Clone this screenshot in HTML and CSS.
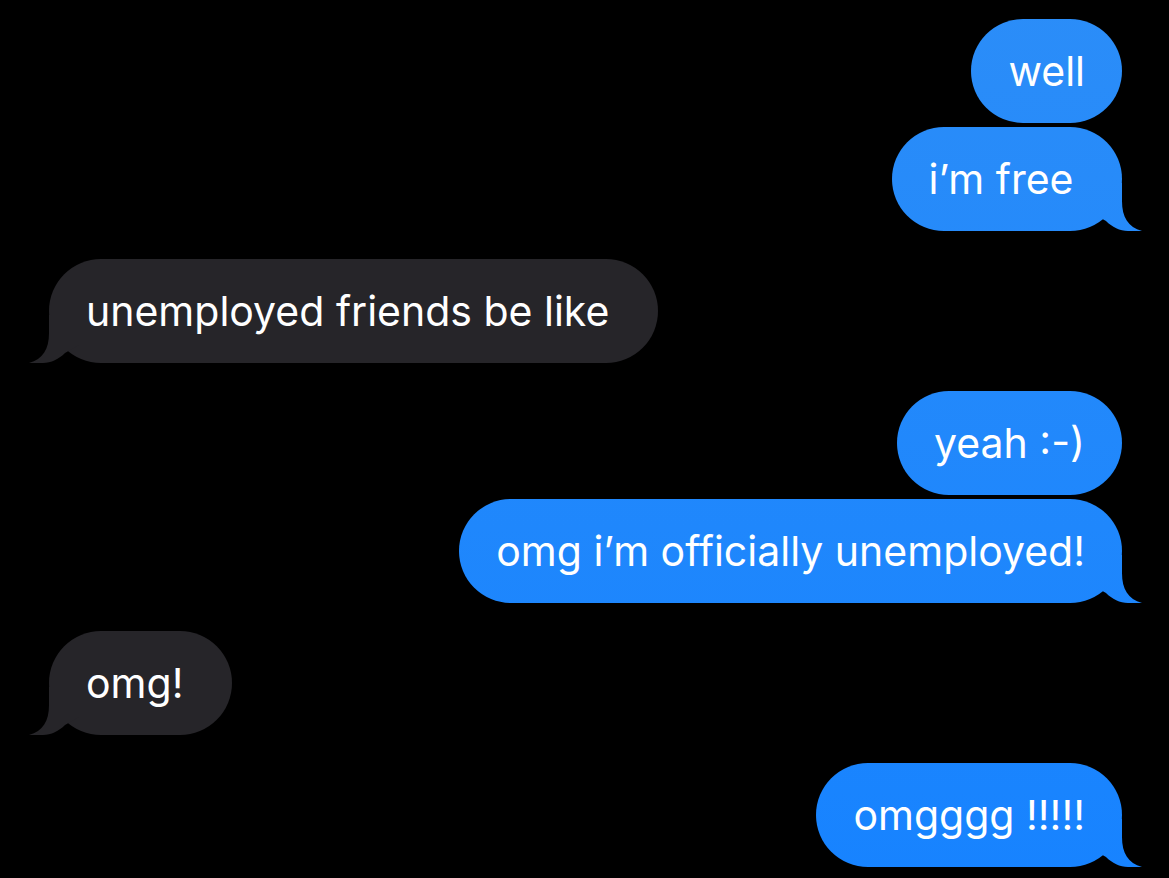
FILE: index.html
```html
<!DOCTYPE html>
<html lang="en">

<head>
    <meta charset="UTF-8" />
    <meta name="viewport" content="width=device-width, initial-scale=1.0" />
    <title>Messages</title>
    <link rel="stylesheet" href="styles.css">
</head>

<body>
    <main class="thread">
        <div class="group sent">
            <p class="bubble">well</p>
            <p class="bubble tail">i’m free&nbsp;</p>
        </div>
        <div class="group received">
            <p class="bubble tail">unemployed friends be like&nbsp;</p>
        </div>
        <div class="group sent">
            <p class="bubble">yeah :-)</p>
            <p class="bubble tail">omg i’m officially unemployed!</p>
        </div>
        <div class="group received">
            <p class="bubble tail">omg!&nbsp;</p>
        </div>
        <div class="group sent">
            <p class="bubble tail">omgggg !!!!!</p>
        </div>
    </main>
</body>

</html>
```

FILE: styles.css
```css
body {
  margin: 0;
  background-color: #000;
  font-family: Inter, "Noto Sans", sans-serif;
  color: #fff;
}

.thread {
  display: flex;
  flex-direction: column;
  gap: 28px;
  padding: 19px 47px 0 49px;
}

.group {
  display: flex;
  flex-direction: column;
  gap: 4px;
}

.sent {
  align-items: flex-end;
}

.received {
  align-items: flex-start;
}

.bubble {
  position: relative;
  margin: 0;
  padding: 26px 37px;
  font-size: 41px;
  line-height: 52px;
  border-radius: 52px;
  white-space: nowrap;
}

/* blue shifts slightly down the screen, like the real app */
.sent .bubble {
  background: linear-gradient(#2b8df8, #1783ff) fixed;
}

.received .bubble {
  background: #262529;
}

/* the little tail at the bottom corner of the last bubble */
.tail::before {
  content: "";
  position: absolute;
  bottom: 0;
  width: 52px;
  height: 48px;
  background: inherit;
  clip-path: path("M0,0 H30 V18 C30,34 36,44 50,48 L36,48 C28,48 20,44 14,38 L0,30 Z");
}

.sent .tail::before {
  right: -22px;
}

.received .tail::before {
  left: -22px;
  transform: scaleX(-1);
}
```
